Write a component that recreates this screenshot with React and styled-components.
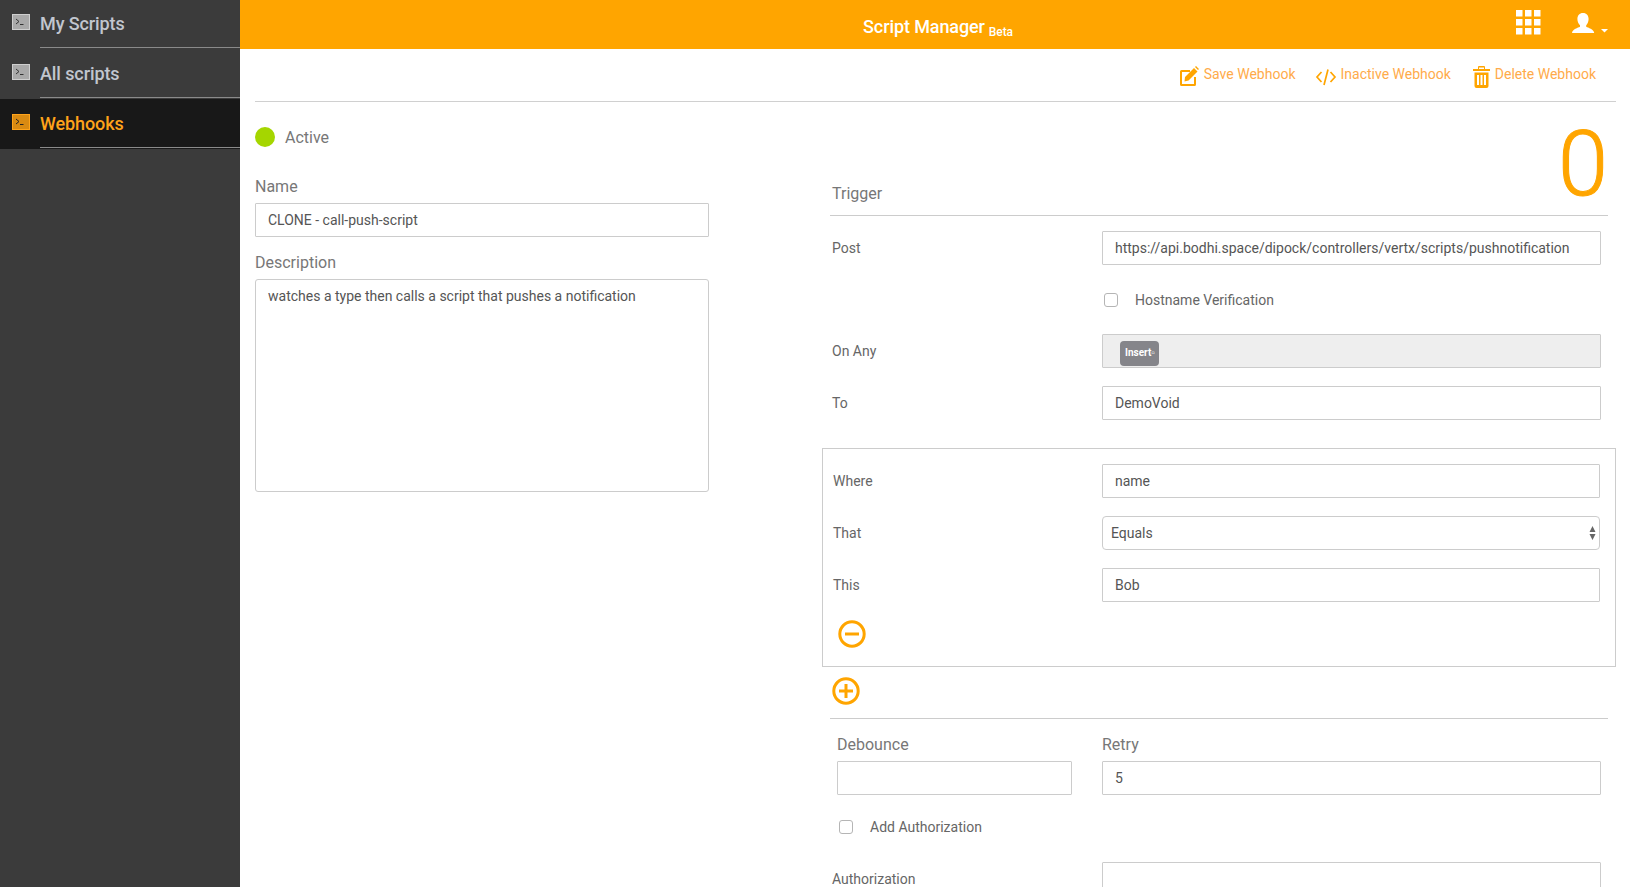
import React from 'react';
import styled, { createGlobalStyle } from 'styled-components';

const orange = '#ffa500';

const GlobalStyle = createGlobalStyle`
    html, body {
        margin: 0;
        height: 100%;
        overflow: hidden;
        background: #fff;
        font-family: Roboto, "Liberation Sans", sans-serif;
    }
    * { box-sizing: border-box; }
`;

const Page = styled.div`
    display: flex;
    width: 1630px;
    height: 887px;
    overflow: hidden;
`;

const Sidebar = styled.nav`
    width: 240px;
    flex: none;
    background: #3b3b3b;
`;

const NavItem = styled.div`
    display: flex;
    height: 50px;
    padding-left: 12px;
    margin-top: ${(p) => (p.$active ? '-1px' : '0')};
    padding-top: ${(p) => (p.$active ? '1px' : '0')};
    background: ${(p) => (p.$active ? '#181818' : 'transparent')};
    color: ${(p) => (p.$active ? '#ffa31a' : '#c2c6cf')};
`;

const NavIcon = styled.svg`
    width: 18px;
    height: 16px;
    margin-top: 14px;
    flex: none;
`;

const NavLabel = styled.div`
    flex: 1;
    margin-left: 10px;
    height: 48px;
    border-bottom: 1px solid #8a8a8a;
    font-size: 18px;
    font-weight: 500;
    letter-spacing: -0.1px;
    line-height: 47px;
`;

const Main = styled.main`
    flex: 1;
    min-width: 0;
`;

const Header = styled.header`
    position: relative;
    height: 49px;
    background: ${orange};
    display: flex;
    justify-content: center;
    color: #fff;
`;

const Title = styled.div`
    font-size: 18px;
    font-weight: 500;
    line-height: 54px;
    margin-left: 6px;
    letter-spacing: -0.1px;
    small {
        font-size: 12px;
        margin-left: 4px;
        position: relative;
        top: 3px;
    }
`;

const HeaderIcons = styled.div`
    position: absolute;
    right: 0;
    top: 0;
    display: flex;
`;

const AppsIcon = styled.svg`
    width: 25px;
    height: 25px;
    margin: 10px 0 0 0;
    fill: #fff;
`;

const UserIcon = styled.svg`
    width: 36px;
    height: 24px;
    margin: 12px 22px 0 31px;
    fill: #fff;
`;

const Toolbar = styled.div`
    height: 53px;
    margin: 0 14px 0 15px;
    padding: 0 20px 0 0;
    border-bottom: 1px solid #d0d0d0;
    display: flex;
    justify-content: flex-end;
    align-items: flex-start;
    gap: 21px;
`;

const ToolButton = styled.div`
    display: flex;
    align-items: flex-start;
    gap: ${(p) => p.$gap || 5}px;
    padding-top: 17px;
    font-size: 14px;
    line-height: 16px;
    color: #ffab4a;
    svg {
        display: block;
        fill: ${orange};
        overflow: visible;
    }
`;

const Content = styled.div`
    display: flex;
    padding-left: 15px;
`;

const LeftColumn = styled.section`
    width: 454px;
    flex: none;
`;

const ActiveRow = styled.div`
    display: flex;
    align-items: center;
    height: 20px;
    margin-top: 25px;
    font-size: 16px;
    color: #777;
`;

const Dot = styled.span`
    width: 20px;
    height: 20px;
    border-radius: 50%;
    background: #a5d600;
    margin-right: 10px;
`;

const Label = styled.label`
    display: block;
    font-size: 16px;
    line-height: 19px;
    color: #777;
    margin: ${(p) => p.$margin || '0 0 7px'};
`;

const Input = styled.div`
    height: 34px;
    border: 1px solid #ccc;
    border-radius: 1px;
    padding: 0 12px;
    font-size: 14px;
    line-height: 32px;
    color: #555;
    background: #fff;
`;

const TextArea = styled(Input)`
    height: 213px;
    border-radius: 3px;
    line-height: 16px;
    padding-top: 8px;
`;

const RightColumn = styled.section`
    width: 794px;
    margin-left: 113px;
    flex: none;
`;

const TriggerHead = styled.div`
    height: 114px;
    margin: 0 8px;
    border-bottom: 1px solid #ccc;
    display: flex;
    justify-content: space-between;
    align-items: flex-end;
`;

const TriggerTitle = styled.div`
    font-size: 16px;
    line-height: 19px;
    color: #777;
    margin: 0 0 12px 2px;
`;

const BigCount = styled.div`
    font-size: 90px;
    font-weight: 300;
    -webkit-text-stroke: 1px ${orange};
    line-height: 94px;
    color: ${orange};
    margin: 0 0 3px 0;
`;

const Row = styled.div`
    display: grid;
    grid-template-columns: ${(p) => p.$first || 270}px ${(p) => p.$width || 499}px;
    align-items: center;
    height: 34px;
    margin: ${(p) => p.$margin || '16px 0 0 10px'};
    font-size: 14px;
    color: #666;
`;

const Disabled = styled(Input)`
    background: #eee;
    padding: 6px 0 0 17px;
`;

const Tag = styled.span`
    display: block;
    width: 39px;
    height: 25px;
    border-radius: 4px;
    background: #85858a;
    color: #fff;
    font-size: 10px;
    font-weight: 700;
    line-height: 23px;
    padding-left: 5px;
    white-space: nowrap;
`;

const CheckRow = styled.div`
    display: flex;
    align-items: center;
    margin: ${(p) => p.$margin};
    font-size: 14px;
    color: #666;
`;

const CheckBox = styled.span`
    width: 14px;
    height: 14px;
    border: 1px solid #b5b5b5;
    border-radius: 3px;
    background: #fff;
    margin-right: 17px;
`;

const ConditionBox = styled.div`
    height: 219px;
    margin-top: 28px;
    border: 1px solid #ccc;
    display: flow-root;
`;

const SelectBox = styled(Input)`
    position: relative;
    border-radius: 4px;
    padding-left: 8px;
`;

const SelectArrows = styled.svg`
    position: absolute;
    right: 3px;
    top: 9px;
    width: 7px;
    height: 14px;
    fill: #666;
`;

const RoundIcon = styled.svg`
    display: block;
    width: 28px;
    height: 28px;
    margin: ${(p) => p.$margin};
`;

const AddRow = styled.div`
    height: 52px;
    margin: 0 8px;
    border-bottom: 1px solid #ccc;
    display: flow-root;
`;

const LimitGrid = styled.div`
    display: grid;
    grid-template-columns: 235px 499px;
    column-gap: 30px;
    margin: 16px 0 0 15px;
`;

const Terminal = ({ color, inner, prompt }) => (
    <NavIcon viewBox="0 0 18 16">
        <rect x="0.5" y="0.5" width="17" height="15" fill={inner} stroke={color} />
        <path d="M4 5l3 2.500L4 10M8 10.500h3.500" fill="none" stroke={prompt} strokeWidth="1" />
    </NavIcon>
);

const Field = ({ label, children, ...rest }) => (
    <Row {...rest}>
        <span>{label}</span>
        {children}
    </Row>
);

const Circle = ({ plus, margin }) => (
    <RoundIcon viewBox="0 0 28 28" $margin={margin}>
        <circle cx="14" cy="14" r="12.200" fill="none" stroke={orange} strokeWidth="3" />
        <path d={plus ? 'M7 14h14M14 7v14' : 'M7 14h14'} stroke={orange} strokeWidth="3" />
    </RoundIcon>
);

const App = () => (
    <Page>
        <GlobalStyle />
        <Sidebar>
            <NavItem>
                <Terminal color="#cfcfcf" inner="#a9a9a9" prompt="#333" />
                <NavLabel>My Scripts</NavLabel>
            </NavItem>
            <NavItem>
                <Terminal color="#cfcfcf" inner="#a9a9a9" prompt="#333" />
                <NavLabel>All scripts</NavLabel>
            </NavItem>
            <NavItem $active>
                <Terminal color="#ffa31a" inner="#d98a12" prompt="#222" />
                <NavLabel>Webhooks</NavLabel>
            </NavItem>
        </Sidebar>
        <Main>
            <Header>
                <Title>
                    Script Manager<small>Beta</small>
                </Title>
                <HeaderIcons>
                    <AppsIcon viewBox="0 0 25 25">
                        {[0, 9, 18].map((y) =>
                            [0, 9, 18].map((x) => <rect key={`${x}-${y}`} x={x} y={y} width="6.500" height="6.500" />)
                        )}
                    </AppsIcon>
                    <UserIcon viewBox="0 0 36 24">
                        <path d="M11 1c3.600 0 5.600 2.600 5.600 6 0 2.600-1 4.800-2.400 6.200v1.600c2 1.100 7.400 2.200 8 6.200H0c.6-4 6-5.100 8-6.200v-1.600C6.400 11.800 5.400 9.600 5.400 7c0-3.400 2-6 5.600-6z" />
                        <path d="M29 17h7l-3.500 3.500z" />
                    </UserIcon>
                </HeaderIcons>
            </Header>
            <Toolbar>
                <ToolButton>
                    <svg width="20" height="21" viewBox="0 0 20 21">
                        <path d="M2.500 4H11v2H3v12h12v-7h2v7.500a1.500 1.500 0 0 1-1.500 1.500h-13A1.500 1.500 0 0 1 1 18.500v-13A1.500 1.500 0 0 1 2.500 4z" />
                        <path d="M6 11L15 2l3.500 3.500-9 9L5.500 15.500zM16 1l1-1 3 3-1 1z" />
                    </svg>
                    Save Webhook
                </ToolButton>
                <ToolButton $gap={4}>
                    <svg width="20" height="21" viewBox="0 0 20 21" style={{ fill: 'none' }}>
                        <path d="M5.500 6L1 11l4.500 5M14.500 6l4.500 5-4.500 5M12 3.500L8 19" stroke={orange} strokeWidth="1.700" />
                    </svg>
                    Inactive Webhook
                </ToolButton>
                <ToolButton $gap={6}>
                    <svg width="17" height="22" viewBox="-1 0 17 22">
                        <path d="M6 0h5a1 1 0 0 1 1 1v2h5v2H0V3h5V1a1 1 0 0 1 1-1zm0 1.500V3h5V1.500z" />
                        <path fillRule="evenodd" d="M1.500 6.500h14V20a2 2 0 0 1-2 2h-10a2 2 0 0 1-2-2zM4 9v10h2V9zm3.500 0v10h2V9zM11 9v10h2V9z" />
                    </svg>
                    Delete Webhook
                </ToolButton>
            </Toolbar>
            <Content>
                <LeftColumn>
                    <ActiveRow>
                        <Dot />
                        Active
                    </ActiveRow>
                    <Label $margin="30px 0 7px">Name</Label>
                    <Input>CLONE - call-push-script</Input>
                    <Label $margin="16px 0 7px">Description</Label>
                    <TextArea>watches a type then calls a script that pushes a notification</TextArea>
                </LeftColumn>
                <RightColumn>
                    <TriggerHead>
                        <TriggerTitle>Trigger</TriggerTitle>
                        <BigCount>0</BigCount>
                    </TriggerHead>
                    <Field label="Post" $margin="15px 0 0 10px">
                        <Input>https://api.bodhi.space/dipock/controllers/vertx/scripts/pushnotification</Input>
                    </Field>
                    <CheckRow $margin="27px 0 0 282px">
                        <CheckBox />
                        Hostname Verification
                    </CheckRow>
                    <Field label="On Any" $margin="26px 0 0 10px">
                        <Disabled>
                            <Tag>Insert▫</Tag>
                        </Disabled>
                    </Field>
                    <Field label="To" $margin="18px 0 0 10px">
                        <Input>DemoVoid</Input>
                    </Field>
                    <ConditionBox>
                        <Field label="Where" $first={269} $width={498} $margin="15px 0 0 10px">
                            <Input>name</Input>
                        </Field>
                        <Field label="That" $first={269} $width={498} $margin="18px 0 0 10px">
                            <SelectBox>
                                Equals
                                <SelectArrows viewBox="0 0 7 14">
                                    <path d="M3.500 0l3 6H.5zM3.500 14L.5 8h6z" />
                                </SelectArrows>
                            </SelectBox>
                        </Field>
                        <Field label="This" $first={269} $width={498} $margin="18px 0 0 10px">
                            <Input>Bob</Input>
                        </Field>
                        <Circle margin="18px 0 0 15px" />
                    </ConditionBox>
                    <AddRow>
                        <Circle plus margin="10px 0 0 2px" />
                    </AddRow>
                    <LimitGrid>
                        <div>
                            <Label>Debounce</Label>
                            <Input />
                        </div>
                        <div>
                            <Label>Retry</Label>
                            <Input>5</Input>
                        </div>
                    </LimitGrid>
                    <CheckRow $margin="24px 0 0 17px">
                        <CheckBox />
                        Add Authorization
                    </CheckRow>
                    <Field label="Authorization" $margin="27px 0 0 10px">
                        <Input />
                    </Field>
                </RightColumn>
            </Content>
        </Main>
    </Page>
);

export default App;
